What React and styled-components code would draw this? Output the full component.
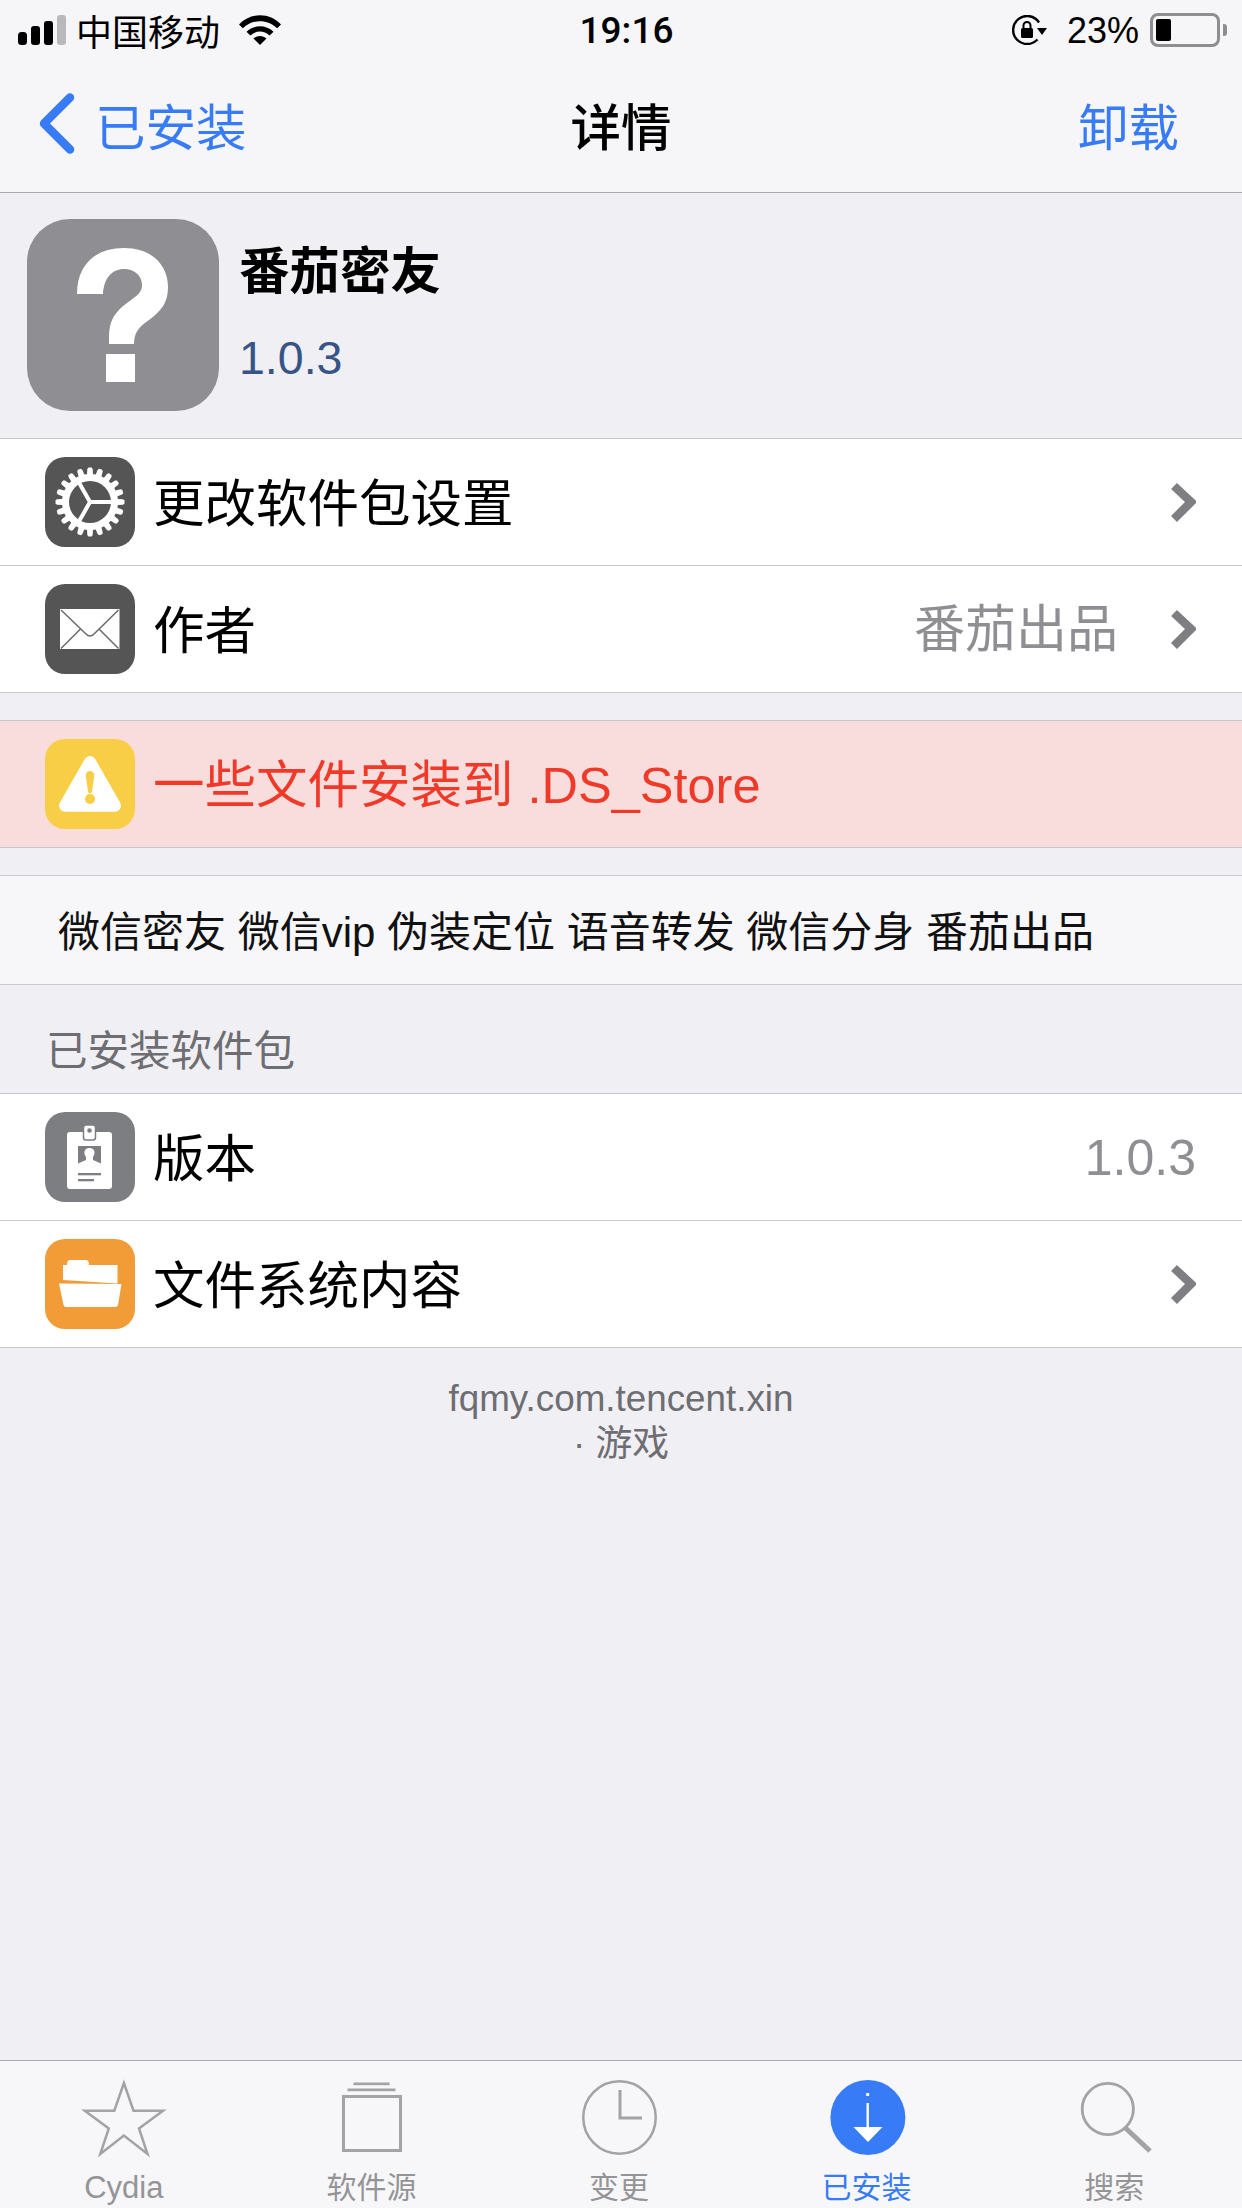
import React from 'react';
import styled, { createGlobalStyle } from 'styled-components';

const CJK = '"Liberation Sans", "Noto Sans CJK SC", sans-serif';
const BLUE = '#377bf6';
const LINE = '#c8c7cc';
const TAB_GREY = '#a3a3a5';

const Global = createGlobalStyle`
  html, body { margin: 0; padding: 0; background: #efeff4; }
  * { box-sizing: border-box; }
  body { font-family: ${CJK}; }
`;

const Page = styled.div`
  width: 1242px; height: 2208px; display: flex; flex-direction: column;
  background: #efeff4; overflow: hidden;
`;
const TopBar = styled.header`
  height: 193px; flex: none; background: #f6f6f9; border-bottom: 1px solid #a9a9ae;
  display: flex; flex-direction: column;
`;
const StatusBar = styled.div`
  height: 60px; display: flex; align-items: center; padding: 0 15px 0 18px; color: #000;
`;
const StatusSide = styled.div`
  flex: 1; display: flex; align-items: center;
  justify-content: ${p => (p.$end ? 'flex-end' : 'flex-start')};
`;
const Carrier = styled.span`
  font-size: 36px; line-height: 60px; margin: 0 19px 0 10px;
  font-family: "Noto Sans CJK SC", sans-serif;
`;
const Clock = styled.span`
  font-family: Roboto, sans-serif; font-weight: 500; font-size: 37px; line-height: 60px;
  padding: 2px 0 0 8px;
`;
const Percent = styled.span`
  font-size: 36px; line-height: 60px; margin: 0 11px 0 20px; padding-top: 2px;
`;
const Battery = styled.div`
  width: 70px; height: 34px; border: 3px solid #8e8e8e; border-radius: 8px; padding: 3px;
  margin-right: 3px; display: flex;
`;
const BatteryFill = styled.div`
  width: 15px; background: #000; border-radius: 2px;
`;
const BatteryNub = styled.div`
  width: 4px; height: 12px; background: #8e8e8e; border-radius: 0 3px 3px 0;
`;
const NavBar = styled.nav`
  flex: 1; display: grid; grid-template-columns: 1fr auto 1fr; align-items: center;
  padding: 0 38px 5px; font-family: "Noto Sans CJK SC", sans-serif;
`;
const BackLink = styled.div`
  display: flex; align-items: center; gap: 20px; color: ${BLUE}; font-size: 50.500px; line-height: 60px;
`;
const NavTitle = styled.div`
  font-size: 50.500px; font-weight: 500; line-height: 60px; color: #000;
`;
const NavAction = styled.div`
  justify-self: end; margin-right: 25px; color: ${BLUE}; font-size: 50.500px; line-height: 60px;
`;
const Summary = styled.section`
  height: 245px; flex: none; display: flex; align-items: flex-start; padding: 26px 0 0 27px; gap: 20px;
`;
const BigIcon = styled.div`
  width: 192px; height: 192px; border-radius: 43px; background: #8e8e93; flex: none;
  display: flex; align-items: center; justify-content: center;
`;
const SummaryText = styled.div`
  display: flex; flex-direction: column; padding-top: 16px;
`;
const AppName = styled.div`
  font-family: "Noto Sans CJK SC", sans-serif; font-weight: 700; font-size: 50.500px; line-height: 64px; color: #000;
`;
const AppVersion = styled.div`
  font-size: 46.500px; line-height: 54px; margin-top: 32px; color: #385487;
`;
const Group = styled.section`
  flex: none; background: ${p => p.$bg || '#fff'}; border-top: 1px solid ${LINE};
  margin-top: ${p => p.$gap || 0}px;
`;
const Row = styled.div`
  height: 127px; display: flex; align-items: center; padding: 0 46px 0 45px;
  border-bottom: 1px solid ${LINE};
`;
const RowIcon = styled.div`
  width: 90px; height: 90px; border-radius: 20px; flex: none; background: ${p => p.$bg};
`;
const RowLabel = styled.div`
  flex: 1; margin-left: 18px; padding-top: 3px; font-size: 51.500px; line-height: 60px; color: ${p => p.$color || '#000'};
  font-family: ${CJK}; white-space: nowrap;
`;
const LatinRun = styled.span`
  font-size: 50.500px;
`;
const RowValue = styled.div`
  font-size: ${p => (p.$latin ? 50 : 51)}px; line-height: 60px; color: #8e8e93; white-space: nowrap; padding-top: 2px;
`;
const Chevron = styled.svg`
  width: 28px; height: 42px; flex: none; margin-left: ${p => (p.$after ? 50 : 0)}px;
`;
const Description = styled.div`
  height: 109px; display: flex; align-items: center; padding: 0 0 3px 58px; font-size: 42px;
  background: #f7f7fa; border-bottom: 1px solid ${LINE}; color: #111; white-space: pre;
  font-family: ${CJK};
`;
const SectionTitle = styled.div`
  height: 108px; flex: none; padding: 33px 0 0 46px; font-size: 41.500px; line-height: 60px; color: #6d6d72;
  font-family: "Noto Sans CJK SC", sans-serif;
`;
const Footer = styled.footer`
  flex: 1; padding-top: 28px; text-align: center; color: #6d6d72; font-size: 36.800px; line-height: 45px;
  font-family: ${CJK};
`;
const TabBar = styled.nav`
  height: 148px; flex: none; background: #f7f7fa; border-top: 1px solid #a9a9ae;
  display: grid; grid-template-columns: repeat(5, 1fr); padding-right: 4px;
`;
const Tab = styled.div`
  display: flex; flex-direction: column; align-items: center; padding-top: 19px;
  color: ${p => (p.$active ? BLUE : TAB_GREY)};
`;
const TabIcon = styled.svg`
  width: 80px; height: 80px; flex: none; overflow: visible;
`;
const TabLabel = styled.div`
  font-size: ${p => (p.$latin ? 31 : 30)}px; line-height: 36px; margin-top: 10px; font-family: ${CJK};
  color: ${p => (p.$active ? BLUE : '#949497')};
`;

function gearPath() {
  const teeth = 20, cx = 45, cy = 45, ro = 34.5, ri = 28;
  let d = '';
  for (let i = 0; i < teeth; i++) {
    const a = (i / teeth) * Math.PI * 2;
    const w = (Math.PI * 2) / teeth;
    const pts = [
      [ri, a - w * 0.5], [ri, a - w * 0.34], [ro - 1.5, a - w * 0.26], [ro, a - w * 0.15],
      [ro, a + w * 0.15], [ro - 1.5, a + w * 0.26], [ri, a + w * 0.34],
    ];
    pts.forEach(([r, t], k) => {
      d += `${i === 0 && k === 0 ? 'M' : 'L'}${(cx + r * Math.cos(t)).toFixed(2)} ${(cy + r * Math.sin(t)).toFixed(2)}`;
    });
  }
  return d + 'Z';
}

const SignalBars = () => (
  <svg width="48" height="30" viewBox="0 0 48 30">
    <rect x="0" y="17" width="9" height="13" rx="3.500" fill="#000" />
    <rect x="13" y="11" width="9" height="19" rx="3" fill="#000" />
    <rect x="26" y="6" width="9" height="24" rx="3" fill="#000" />
    <rect x="39" y="0" width="9" height="30" rx="3" fill="#b9b9bb" />
  </svg>
);
const Wifi = () => (
  <svg width="42" height="30" viewBox="0 0 42 30">
    <path d="M0 9.500C11.500 -2.800 30.500 -2.800 42 9.500L38.200 13.200C28.500 3.800 13.500 3.800 3.800 13.200Z" fill="#000" />
    <path d="M7.500 16.800C15 9.400 27 9.400 34.500 16.800L30.600 20.600C24.800 15.300 17.200 15.300 11.400 20.600Z" fill="#000" />
    <path d="M14.500 23.600C18.200 20 23.800 20 27.500 23.600L21 30Z" fill="#000" />
  </svg>
);
const RotationLock = () => (
  <svg width="35" height="30" viewBox="0 0 35 30">
    <path d="M27 7.500A14 14 0 1 0 25.500 24.500" fill="none" stroke="#000" strokeWidth="2.400" />
    <path d="M25 13H35L30 20Z" fill="#000" />
    <rect x="9" y="13" width="12" height="10" rx="1.500" fill="#000" />
    <path d="M11.500 13.500V10.500A3.500 3.500 0 0 1 18.500 10.500V13.500" fill="none" stroke="#000" strokeWidth="2" />
  </svg>
);
const BackChevron = () => (
  <svg width="37" height="63" viewBox="0 0 37 63">
    <path d="M32 5.500L6 31.500L32 57.500" fill="none" stroke={BLUE} strokeWidth="8.500" strokeLinecap="round" strokeLinejoin="round" />
  </svg>
);
const QuestionMark = () => (
  <svg width="192" height="192" viewBox="0 0 192 192">
    <path fill="#fff" d="M50 75C50 46 68 29 97 29C127 29 141 48 141 68C141 84 134 92 122 101C112 108 107 113 107 125V125H82V118C82 101 88 93 100 84C111 76 115 73 115 66C115 57 108 50 97 50C85 50 77 59 76 75Z" />
    <rect x="79" y="135" width="29" height="28" fill="#fff" />
  </svg>
);
const GearIcon = () => (
  <svg width="90" height="90" viewBox="0 0 90 90">
    <path d={gearPath()} fill="#fff" />
    <circle cx="45" cy="45" r="21" fill="#555" />
    <path d="M45 45H68M45 45L32.500 67M45 45L32.500 23" stroke="#fff" strokeWidth="4" fill="none" />
  </svg>
);
const MailIcon = () => (
  <svg width="90" height="90" viewBox="0 0 90 90">
    <rect x="15" y="25" width="59.500" height="40" fill="#fff" />
    <path d="M16 26L41 50Q45 54 49 50L73.500 26M16 64.500L35.500 45M73.500 64.500L54 45" fill="none" stroke="#6a6a6a" strokeWidth="1.500" />
  </svg>
);
const WarningIcon = () => (
  <svg width="90" height="90" viewBox="0 0 90 90">
    <path d="M45 23L70 66.700H20Z" fill="#fff" stroke="#fff" strokeWidth="12" strokeLinejoin="round" />
    <path d="M40.700 36.500C40.700 30.500 49.300 30.500 49.300 36.500L47 52.500C46.800 54.500 43.200 54.500 43 52.500Z" fill="#f8ce46" />
    <circle cx="45" cy="60" r="5" fill="#f8ce46" />
  </svg>
);
const BadgeIcon = () => (
  <svg width="90" height="90" viewBox="0 0 90 90">
    <rect x="22" y="20" width="45" height="57" rx="3" fill="#fff" />
    <rect x="38.500" y="13" width="12" height="15" rx="2.500" fill="#fff" stroke="#7d7e82" strokeWidth="1.500" />
    <circle cx="44.500" cy="18.500" r="2.300" fill="#7d7e82" />
    <rect x="33" y="34" width="23" height="21" fill="#7d7e82" />
    <path d="M33 55V51.500L41 48V45C38.500 42 38.500 36 44.500 36C50.500 36 50.500 42 48 45V48L56 51.500V55Z" fill="#fff" />
    <rect x="33" y="61" width="23" height="2.300" fill="#7d7e82" />
    <rect x="33" y="67" width="16" height="2.300" fill="#7d7e82" />
  </svg>
);
const FolderIcon = () => (
  <svg width="90" height="90" viewBox="0 0 90 90">
    <path d="M18 41V26H22Q22 21 25 21H41Q44 21 44 26H72.500V44.500Z" fill="#fff" />
    <path d="M14 44.500L76.500 45L73 66Q72.500 68 70 68H21Q19 68 18.500 66Z" fill="#fff" />
  </svg>
);
const RowChevron = ({ $after }) => (
  <Chevron $after={$after} viewBox="0 0 28 42">
    <path d="M6 5L23 21L6 38" fill="none" stroke="#7f7f83" strokeWidth="8.500" strokeLinejoin="miter" />
  </Chevron>
);

const StarGlyph = () => (
  <TabIcon viewBox="0 0 80 80">
    <path d="M39.900 3L49.500 30.700H79L55 48.500L63.500 74L39.900 55.500L16.300 74L24.800 48.500L0.800 30.700H30.300Z" fill="none" stroke="currentColor" strokeWidth="2.500" strokeLinejoin="miter" />
  </TabIcon>
);
const SourcesGlyph = () => (
  <TabIcon viewBox="0 0 80 80">
    <rect x="12.500" y="16.500" width="57" height="54" fill="none" stroke="currentColor" strokeWidth="3" />
    <rect x="16.500" y="8.500" width="48" height="2.700" fill="currentColor" />
    <rect x="22.500" y="2.500" width="36" height="2.700" fill="currentColor" />
  </TabIcon>
);
const ClockGlyph = () => (
  <TabIcon viewBox="0 0 80 80">
    <circle cx="40.500" cy="37.500" r="36.250" fill="none" stroke="currentColor" strokeWidth="2.500" />
    <path d="M41 10V38H63" fill="none" stroke="currentColor" strokeWidth="3" />
  </TabIcon>
);
const InstalledGlyph = () => (
  <TabIcon viewBox="0 0 80 80">
    <circle cx="40.900" cy="37.500" r="37.500" fill="currentColor" />
    <rect x="39.200" y="13" width="3" height="3" fill="#fff" />
    <rect x="39.500" y="23" width="2.400" height="25" fill="#fff" />
    <path d="M26.500 47H55.500L41 62Z" fill="#fff" />
  </TabIcon>
);
const SearchGlyph = () => (
  <TabIcon viewBox="0 0 80 80">
    <circle cx="33.800" cy="29" r="25.600" fill="none" stroke="currentColor" strokeWidth="2.800" />
    <path d="M51.500 48L76 71" fill="none" stroke="currentColor" strokeWidth="5" />
  </TabIcon>
);

const tabs = [
  { label: 'Cydia', Icon: StarGlyph, latin: true },
  { label: '软件源', Icon: SourcesGlyph },
  { label: '变更', Icon: ClockGlyph },
  { label: '已安装', Icon: InstalledGlyph, active: true },
  { label: '搜索', Icon: SearchGlyph },
];

export default function App() {
  return (
    <Page>
      <Global />
      <TopBar>
        <StatusBar>
          <StatusSide>
            <SignalBars />
            <Carrier>中国移动</Carrier>
            <Wifi />
          </StatusSide>
          <Clock>19:16</Clock>
          <StatusSide $end>
            <RotationLock />
            <Percent>23%</Percent>
            <Battery><BatteryFill /></Battery>
            <BatteryNub />
          </StatusSide>
        </StatusBar>
        <NavBar>
          <BackLink><BackChevron />已安装</BackLink>
          <NavTitle>详情</NavTitle>
          <NavAction>卸载</NavAction>
        </NavBar>
      </TopBar>
      <Summary>
        <BigIcon><QuestionMark /></BigIcon>
        <SummaryText>
          <AppName>番茄密友</AppName>
          <AppVersion>1.0.3</AppVersion>
        </SummaryText>
      </Summary>
      <Group>
        <Row>
          <RowIcon $bg="#555555"><GearIcon /></RowIcon>
          <RowLabel>更改软件包设置</RowLabel>
          <RowChevron />
        </Row>
        <Row>
          <RowIcon $bg="#555555"><MailIcon /></RowIcon>
          <RowLabel>作者</RowLabel>
          <RowValue>番茄出品</RowValue>
          <RowChevron $after />
        </Row>
      </Group>
      <Group $gap={27} $bg="#f9dcdc">
        <Row>
          <RowIcon $bg="#f8ce46"><WarningIcon /></RowIcon>
          <RowLabel $color="#ef3a29">一些文件安装到<LatinRun> .DS_Store</LatinRun></RowLabel>
        </Row>
      </Group>
      <Group $gap={27} $bg="#f7f7fa">
        <Description>微信密友 微信vip 伪装定位 语音转发 微信分身 番茄出品</Description>
      </Group>
      <SectionTitle>已安装软件包</SectionTitle>
      <Group>
        <Row>
          <RowIcon $bg="#7d7e82"><BadgeIcon /></RowIcon>
          <RowLabel>版本</RowLabel>
          <RowValue $latin>1.0.3</RowValue>
        </Row>
        <Row>
          <RowIcon $bg="#f29c38"><FolderIcon /></RowIcon>
          <RowLabel>文件系统内容</RowLabel>
          <RowChevron />
        </Row>
      </Group>
      <Footer>
        <div>fqmy.com.tencent.xin</div>
        <div>· 游戏</div>
      </Footer>
      <TabBar>
        {tabs.map(({ label, Icon, active, latin }) => (
          <Tab key={label} $active={active}>
            <Icon />
            <TabLabel $active={active} $latin={latin}>{label}</TabLabel>
          </Tab>
        ))}
      </TabBar>
    </Page>
  );
}
